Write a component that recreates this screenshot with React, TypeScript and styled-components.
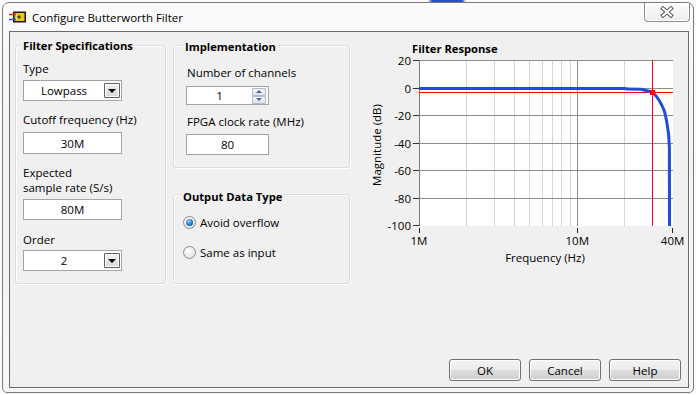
import styled, { createGlobalStyle } from "styled-components";

const FONT = `"Open Sans", "Liberation Sans", sans-serif`;

const GlobalStyle = createGlobalStyle`
  html, body {
    margin: 0;
    padding: 0;
    background: #fbfbfb;
  }
  body {
    font-family: ${FONT};
    font-size: 11.5px;
    color: #000;
  }
`;

const Screen = styled.div`
  position: relative;
  width: 696px;
  height: 395px;
  padding: 2px 2px 0 2px;
  box-sizing: border-box;
  overflow: hidden;
`;

const Behind = styled.div`
  position: absolute;
  left: 430px;
  top: -6px;
  width: 34px;
  height: 12px;
  border-radius: 3px;
  background: linear-gradient(#3a5fd0, #1d3fb8);
  filter: blur(1.5px);
`;

const Window = styled.div`
  position: relative;
  box-sizing: border-box;
  width: 692px;
  height: 391px;
  border: 1px solid #7a7a7a;
  border-radius: 7px 7px 5px 5px;
  background: linear-gradient(180deg, #fafafa 0%, #f3f3f3 40%, #f6f6f6 100%);
  display: flex;
  flex-direction: column;
`;

const TitleBar = styled.div`
  height: 28px;
  display: flex;
  align-items: center;
  padding-left: 6px;
`;

const TitleText = styled.span`
  margin-left: 5px;
  font-size: 11.5px;
  color: #000;
  padding-top: 1px;
`;

const CloseBtn = styled.div`
  align-self: flex-start;
  margin-left: auto;
  margin-right: 3px;
  box-sizing: border-box;
  width: 46px;
  height: 19px;
  border: 1px solid #8e8e8e;
  border-top: none;
  border-radius: 0 0 4px 4px;
  background: linear-gradient(#fdfdfd, #ececec);
  box-shadow: inset 0 0 0 1px #ffffff;
  display: flex;
  align-items: center;
  justify-content: center;
`;

const Panel = styled.div`
  flex: 1;
  margin: 0 4px 4px 6px;
  border: 1px solid #6b6b6b;
  background: #f0f0f0;
  display: flex;
  flex-direction: column;
  padding: 13px 0 6px 5px;
`;

const ContentRow = styled.div`
  display: flex;
  align-items: flex-start;
`;

const Column = styled.div`
  flex-shrink: 0;
  display: flex;
  flex-direction: column;
  margin-left: 7px;
  width: 177px;
  gap: 26px;
`;

const Group = styled.div<{ $w: number; $h: number }>`
  flex-shrink: 0;
  box-sizing: border-box;
  width: ${(p) => p.$w}px;
  height: ${(p) => p.$h}px;
  border: 1px solid #d5dfe5;
  border-radius: 3px;
  box-shadow: inset 1px 1px 0 #ffffff, 1px 1px 0 #ffffff;
  display: flex;
  flex-direction: column;
`;

const GroupTitle = styled.div<{ $left: number; $top: number }>`
  align-self: flex-start;
  margin: ${(p) => p.$top}px 0 0 ${(p) => p.$left}px;
  padding: 0 2px;
  background: #f0f0f0;
  font-weight: 700;
  font-size: 11.2px;
  line-height: 15px;
`;

const GroupBody = styled.div<{ $left: number }>`
  display: flex;
  flex-direction: column;
  align-items: flex-start;
  padding-left: ${(p) => p.$left}px;
`;

const Label = styled.div<{ $top: number; $indent?: number }>`
  margin-top: ${(p) => p.$top}px;
  margin-left: ${(p) => p.$indent ?? 0}px;
  line-height: 15px;
`;

const TextBox = styled.div<{ $top: number; $w: number; $h: number }>`
  box-sizing: border-box;
  margin-top: ${(p) => p.$top}px;
  width: ${(p) => p.$w}px;
  height: ${(p) => p.$h}px;
  background: #ffffff;
  border: 1px solid #a3a3a3;
  display: flex;
  align-items: center;
  justify-content: center;
  line-height: 15px;
`;

const Ring = styled.div<{ $top: number }>`
  box-sizing: border-box;
  margin-top: ${(p) => p.$top}px;
  width: 99px;
  height: 21px;
  background: #ffffff;
  border: 1px solid #a3a3a3;
  display: flex;
  align-items: center;
  padding-right: 1px;
`;

const RingText = styled.span`
  flex: 1;
  text-align: center;
  line-height: 15px;
`;

const ArrowBtn = styled.span`
  box-sizing: border-box;
  width: 16px;
  height: 15px;
  border: 1px solid #5e5e5e;
  border-radius: 1px;
  background: linear-gradient(#f2f2f2, #d8d8d8);
  box-shadow: inset 0 0 0 1px #ffffff;
  display: flex;
  align-items: center;
  justify-content: center;
  &::after {
    content: "";
    margin-top: 1px;
    border-left: 4px solid transparent;
    border-right: 4px solid transparent;
    border-top: 4px solid #000000;
  }
`;

const Numeric = styled.div<{ $top: number }>`
  box-sizing: border-box;
  margin-top: ${(p) => p.$top}px;
  width: 83px;
  height: 19px;
  background: #ffffff;
  border: 1px solid #a3a3a3;
  display: flex;
  align-items: center;
  padding-right: 2px;
`;

const Spinner = styled.div`
  width: 14px;
  height: 16px;
  display: flex;
  flex-direction: column;
`;

const SpinHalf = styled.div<{ $down?: boolean }>`
  flex: 1;
  box-sizing: border-box;
  border: 1px solid #b4bccb;
  border-radius: 1px;
  background: linear-gradient(#f3f5f9, #dde3ec);
  display: flex;
  align-items: center;
  justify-content: center;
  &::after {
    content: "";
    border-left: 3px solid transparent;
    border-right: 3px solid transparent;
    ${(p) =>
      p.$down
        ? "border-top: 3px solid #4f6390;"
        : "border-bottom: 3px solid #4f6390;"}
  }
`;

const RadioRow = styled.div<{ $top: number }>`
  margin-top: ${(p) => p.$top}px;
  display: flex;
  align-items: center;
  gap: 4px;
  line-height: 15px;
`;

const RadioDot = styled.span<{ $on?: boolean }>`
  box-sizing: border-box;
  width: 13px;
  height: 13px;
  border-radius: 50%;
  border: 1px solid #8a8a8a;
  background: radial-gradient(circle at 40% 35%, #ffffff 0%, #e2e2e2 80%);
  display: flex;
  align-items: center;
  justify-content: center;
  &::after {
    content: "";
    display: ${(p) => (p.$on ? "block" : "none")};
    width: 7px;
    height: 7px;
    border-radius: 50%;
    background: radial-gradient(circle at 40% 35%, #8fd1ff 0%, #1c76c8 55%, #0b3f7c 100%);
  }
`;

const GraphCol = styled.div`
  flex-shrink: 0;
  margin-left: 10px;
  margin-top: -4px;
  display: flex;
  flex-direction: column;
`;

const GraphTitle = styled.div`
  margin-left: 52px;
  font-weight: 700;
  font-size: 11.2px;
  line-height: 15px;
`;

const ChartSvg = styled.svg`
  display: block;
  margin-top: -6px;
`;

const ButtonRow = styled.div`
  margin-top: auto;
  padding-right: 7px;
  display: flex;
  justify-content: flex-end;
  gap: 8px;
`;

const Button = styled.button`
  box-sizing: border-box;
  width: 72px;
  height: 22px;
  padding: 0;
  font-family: ${FONT};
  font-size: 11.5px;
  color: #000;
  border: 1px solid #707070;
  border-radius: 3px;
  background: linear-gradient(180deg, #f2f2f2 0%, #ebebeb 50%, #dddddd 51%, #cfcfcf 100%);
  box-shadow: inset 0 0 0 1px #fcfcfc;
`;

function WindowIcon() {
  return (
    <svg width="18" height="12" viewBox="0 0 18 12">
      <rect x="4" y="0.5" width="13" height="11" fill="#1b1b1b" />
      <rect x="5.5" y="2" width="10" height="8" fill="#e8c81c" />
      <polygon points="7,3 13,6 7,9" fill="#f7e25a" />
      <path d="M8 6h4M10 4v4" stroke="#1b1b1b" strokeWidth="1" />
      <line x1="0" y1="3.5" x2="7" y2="3.5" stroke="#e0201b" strokeWidth="1.5" />
      <line x1="0" y1="8.5" x2="7" y2="8.5" stroke="#2050d8" strokeWidth="1.5" />
    </svg>
  );
}

function CloseGlyph() {
  return (
    <svg width="14" height="12" viewBox="0 0 14 12">
      <g strokeLinecap="square">
        <path d="M3 2.5L11 9.5M11 2.5L3 9.5" stroke="#5a5a5a" strokeWidth="4" />
        <path d="M3 2.5L11 9.5M11 2.5L3 9.5" stroke="#ffffff" strokeWidth="2" />
      </g>
    </svg>
  );
}

// chart in page coordinates (viewBox mirrors the window)
const PX = (mhz: number) => 419 + Math.log10(mhz) * 158.3;
const PY = (db: number) => 60.8 - (db - 20) * 1.375;
const crisp = (v: number) => Math.floor(v) + 0.5;

const curve: [number, number][] = [
  [419, 88.4],
  [625, 88.4],
  [627, 89.1],
  [641, 89.3],
  [645, 90.2],
  [649, 91.2],
  [652.7, 92.5],
  [656.7, 96.7],
  [659.5, 101],
  [661.7, 105],
  [663.5, 109],
  [665, 113.3],
  [667, 123.3],
  [668.7, 135],
  [669.4, 148],
  [669.5, 226],
];

function ResponseChart() {
  const left = 419;
  const right = 673;
  const top = 60;
  const bottom = 226;
  const minor = [2, 3, 4, 5, 6, 7, 8, 9, 20, 30];
  const dbTicks = [20, 0, -20, -40, -60, -80, -100];
  const xTicks: [number, string][] = [
    [1, "1M"],
    [10, "10M"],
    [40, "40M"],
  ];
  return (
    <ChartSvg width="328" height="220" viewBox="360 50 328 220">
      <rect x={left} y={top} width={right - left} height={bottom - top} fill="#ffffff" />
      {minor.map((f) => (
        <line key={f} x1={crisp(PX(f))} y1={top} x2={crisp(PX(f))} y2={bottom} stroke="#d6d6d6" />
      ))}
      <line x1={crisp(PX(10))} y1={top} x2={crisp(PX(10))} y2={bottom} stroke="#8c8c8c" />
      {dbTicks.slice(0, 6).map((d) => (
        <line key={d} x1={left} y1={crisp(PY(d))} x2={right} y2={crisp(PY(d))} stroke="#8c8c8c" />
      ))}
      <line x1={left + 0.5} y1={top} x2={left + 0.5} y2={bottom} stroke="#7c7c7c" />
      {dbTicks.map((d) => (
        <g key={d}>
          <line x1={413} y1={crisp(PY(d))} x2={419} y2={crisp(PY(d))} stroke="#333" />
          <text x={411} y={PY(d) + 4.3} textAnchor="end" fontSize="11.5" fontFamily={FONT} fill="#000">
            {d}
          </text>
        </g>
      ))}
      {xTicks.map(([f, t]) => (
        <g key={t}>
          <line x1={crisp(PX(f))} y1={228} x2={crisp(PX(f))} y2={233} stroke="#222" />
          <text x={PX(f)} y={245} textAnchor="middle" fontSize="11.5" fontFamily={FONT} fill="#000">
            {t}
          </text>
        </g>
      ))}
      <text x={545} y={262} textAnchor="middle" fontSize="11.5" fontFamily={FONT} fill="#000">
        Frequency (Hz)
      </text>
      <text
        x={0}
        y={0}
        transform="translate(381 145) rotate(-90)"
        textAnchor="middle"
        fontSize="11.5"
        fontFamily={FONT}
        fill="#000"
      >
        Magnitude (dB)
      </text>
      <line x1={left} y1={92.5} x2={right} y2={92.5} stroke="#ff0000" />
      <line x1={652.5} y1={top} x2={652.5} y2={bottom} stroke="#ff0000" />
      <polyline
        points={curve.map(([x, y]) => `${x},${y}`).join(" ")}
        fill="none"
        stroke="#1d4fd6"
        strokeWidth="3"
        strokeLinejoin="round"
      />
      <rect x={650} y={90} width={5} height={5} fill="#ff0000" />
    </ChartSvg>
  );
}

export default function App() {
  return (
    <Screen>
      <GlobalStyle />
      <Behind />
      <Window>
        <TitleBar>
          <WindowIcon />
          <TitleText>Configure Butterworth Filter</TitleText>
          <CloseBtn>
            <CloseGlyph />
          </CloseBtn>
        </TitleBar>
        <Panel>
          <ContentRow>
            <Group $w={151} $h={239}>
              <GroupTitle $left={5} $top={-8}>
                Filter Specifications
              </GroupTitle>
              <GroupBody $left={7}>
                <Label $top={8}>Type</Label>
                <Ring $top={4}>
                  <RingText>Lowpass</RingText>
                  <ArrowBtn />
                </Ring>
                <Label $top={11}>Cutoff frequency (Hz)</Label>
                <TextBox $top={5} $w={99} $h={22}>
                  30M
                </TextBox>
                <Label $top={11}>
                  Expected
                  <br />
                  sample rate (S/s)
                </Label>
                <TextBox $top={4} $w={99} $h={21}>
                  80M
                </TextBox>
                <Label $top={12}>Order</Label>
                <Ring $top={3}>
                  <RingText>2</RingText>
                  <ArrowBtn />
                </Ring>
              </GroupBody>
            </Group>
            <Column>
              <Group $w={177} $h={123}>
                <GroupTitle $left={9} $top={-7}>
                  Implementation
                </GroupTitle>
                <GroupBody $left={12}>
                  <Label $top={11} $indent={1}>
                    Number of channels
                  </Label>
                  <Numeric $top={6}>
                    <RingText>1</RingText>
                    <Spinner>
                      <SpinHalf />
                      <SpinHalf $down />
                    </Spinner>
                  </Numeric>
                  <Label $top={9} $indent={1}>
                    FPGA clock rate (MHz)
                  </Label>
                  <TextBox $top={5} $w={83} $h={21}>
                    80
                  </TextBox>
                </GroupBody>
              </Group>
              <Group $w={177} $h={90}>
                <GroupTitle $left={7} $top={-6}>
                  Output Data Type
                </GroupTitle>
                <GroupBody $left={9}>
                  <RadioRow $top={11}>
                    <RadioDot $on />
                    Avoid overflow
                  </RadioRow>
                  <RadioRow $top={15}>
                    <RadioDot />
                    Same as input
                  </RadioRow>
                </GroupBody>
              </Group>
            </Column>
            <GraphCol>
              <GraphTitle>Filter Response</GraphTitle>
              <ResponseChart />
            </GraphCol>
          </ContentRow>
          <ButtonRow>
            <Button>OK</Button>
            <Button>Cancel</Button>
            <Button>Help</Button>
          </ButtonRow>
        </Panel>
      </Window>
    </Screen>
  );
}
